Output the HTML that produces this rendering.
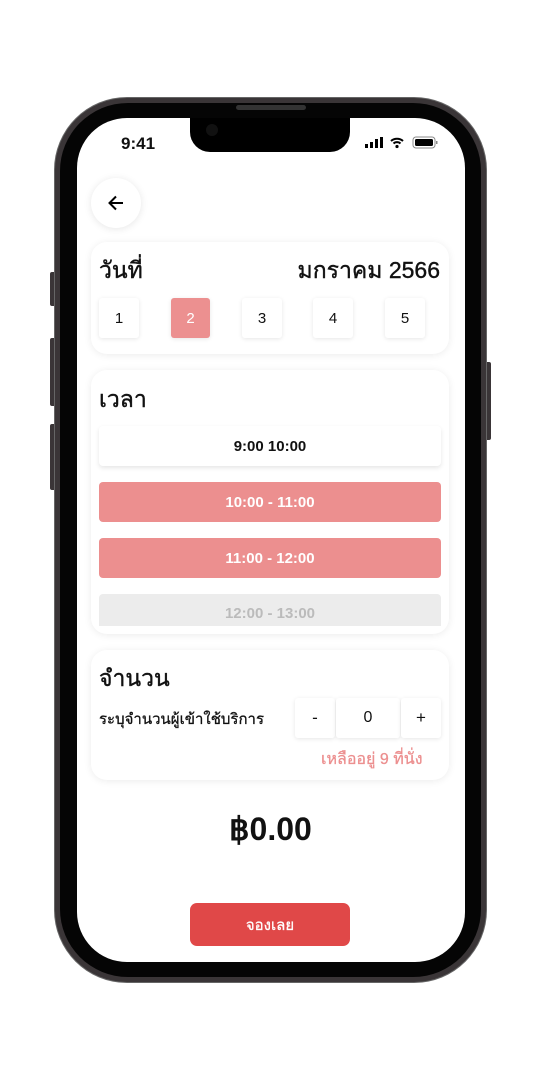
<!DOCTYPE html>
<html><head><meta charset="utf-8"><style>
*{margin:0;padding:0;box-sizing:border-box}
body{width:541px;height:1080px;background:#fff;position:relative;overflow:hidden;font-family:"Liberation Sans","Noto Sans CJK SC",sans-serif;color:#111}
.abs{position:absolute}
.phone{left:55px;top:98px;width:431px;height:884px;border-radius:72px;background:#3a3537;box-shadow:0 0 0 1px #666}
.bez{left:60px;top:103px;width:421px;height:874px;border-radius:68px;background:#050505}
.screen{left:77px;top:118px;width:388px;height:844px;border-radius:50px;background:#fff;overflow:hidden}
.notch{left:190px;top:118px;width:160px;height:34px;background:#000;border-radius:0 0 20px 20px}
.card{background:#fff;border-radius:16px;box-shadow:0 1px 8px rgba(0,0,0,.08)}
.db{width:40px;height:40px;background:#fff;border-radius:3px;box-shadow:0 1px 4px rgba(0,0,0,.1);font-size:15px;display:flex;align-items:center;justify-content:center}
.slot{left:99px;width:342px;height:40px;border-radius:4px;display:flex;align-items:center;justify-content:center;font-size:15px;font-weight:bold}
.h{font-size:23px;-webkit-text-stroke:0.4px #111}
.btn{background:#3a3537;border-radius:2px}
</style></head><body>
<div class="abs btn" style="left:50px;top:272px;width:6px;height:34px"></div>
<div class="abs btn" style="left:50px;top:338px;width:6px;height:68px"></div>
<div class="abs btn" style="left:50px;top:424px;width:6px;height:66px"></div>
<div class="abs btn" style="left:485px;top:362px;width:6px;height:78px"></div>
<div class="abs phone"></div>
<div class="abs bez"></div>
<div class="abs screen"></div>
<div class="abs notch"></div>
<div class="abs" style="left:236px;top:105px;width:70px;height:5px;border-radius:3px;background:#333"></div>
<div class="abs" style="left:206px;top:124px;width:12px;height:12px;border-radius:6px;background:#111"></div>
<div class="abs" style="left:121px;top:134px;font-size:17px;font-weight:bold">9:41</div>
<svg class="abs" style="left:365px;top:136px" width="75" height="14" viewBox="0 0 75 14">
<rect x="0" y="8" width="3" height="4" fill="#000"/><rect x="5" y="6" width="3" height="6" fill="#000"/><rect x="10" y="3" width="3" height="9" fill="#000"/><rect x="15" y="1" width="3" height="11" fill="#000"/>
<path d="M26 5a9 9 0 0 1 12 0M28.5 7.5a5 5 0 0 1 7 0" stroke="#000" stroke-width="2" fill="none"/><circle cx="32" cy="10.5" r="1.6" fill="#000"/>
<rect x="48" y="1" width="22" height="11" rx="3" fill="none" stroke="#888"/><rect x="50" y="3" width="18" height="7" rx="1.5" fill="#000"/><rect x="71" y="5" width="1.5" height="3" fill="#888"/>
</svg>
<div class="abs" style="left:91px;top:178px;width:50px;height:50px;border-radius:25px;background:#fff;box-shadow:0 1px 8px rgba(0,0,0,.1)"></div>
<svg class="abs" style="left:106px;top:193px" width="20" height="20" viewBox="0 0 20 20"><path d="M17 10H4M10 3.5L3.5 10 10 16.5" stroke="#000" stroke-width="2" fill="none"/></svg>

<div class="abs card" style="left:91px;top:242px;width:358px;height:112px"></div>
<div class="abs h" style="left:99px;top:253px">วันที่</div>
<div class="abs h" style="right:101px;top:253px">มกราคม 2566</div>
<div class="abs db" style="left:99px;top:298px">1</div>
<div class="abs db" style="left:171px;top:298px;background:#ec9090;color:#fff;width:39px">2</div>
<div class="abs db" style="left:242px;top:298px">3</div>
<div class="abs db" style="left:313px;top:298px">4</div>
<div class="abs db" style="left:385px;top:298px">5</div>

<div class="abs card" style="left:91px;top:370px;width:358px;height:264px"></div>
<div class="abs h" style="left:99px;top:382px">เวลา</div>
<div class="abs slot" style="top:426px;background:#fff;box-shadow:0 2px 5px rgba(0,0,0,.1)">9:00 10:00</div>
<div class="abs slot" style="top:482px;background:#ec8f8f;color:#fff">10:00 - 11:00</div>
<div class="abs slot" style="top:538px;background:#ec8f8f;color:#fff">11:00 - 12:00</div>
<div class="abs slot" style="top:594px;height:32px;background:#ececec;color:#bbb;border-radius:4px 4px 0 0;align-items:flex-end;padding-bottom:4px">12:00 - 13:00</div>

<div class="abs card" style="left:91px;top:650px;width:358px;height:130px"></div>
<div class="abs h" style="left:99px;top:661px">จำนวน</div>
<div class="abs" style="left:99px;top:707px;font-size:15px;-webkit-text-stroke:0.3px #111">ระบุจำนวนผู้เข้าใช้บริการ</div>
<div class="abs db" style="left:295px;top:698px;font-size:17px">-</div>
<div class="abs db" style="left:336px;top:698px;width:64px;font-size:16px">0</div>
<div class="abs db" style="left:401px;top:698px;font-size:17px">+</div>
<div class="abs" style="left:321px;top:747px;font-size:16px;color:#ec8f8f;-webkit-text-stroke:0.3px #ec8f8f">เหลืออยู่ 9 ที่นั่ง</div>

<div class="abs" style="left:0;width:541px;top:810px;text-align:center;font-size:32px;font-weight:bold">฿0.00</div>
<div class="abs" style="left:190px;top:903px;width:160px;height:43px;border-radius:7px;background:#e04848;color:#fff;font-size:15px;display:flex;align-items:center;justify-content:center;-webkit-text-stroke:0.3px #fff">จองเลย</div>
</body></html>
